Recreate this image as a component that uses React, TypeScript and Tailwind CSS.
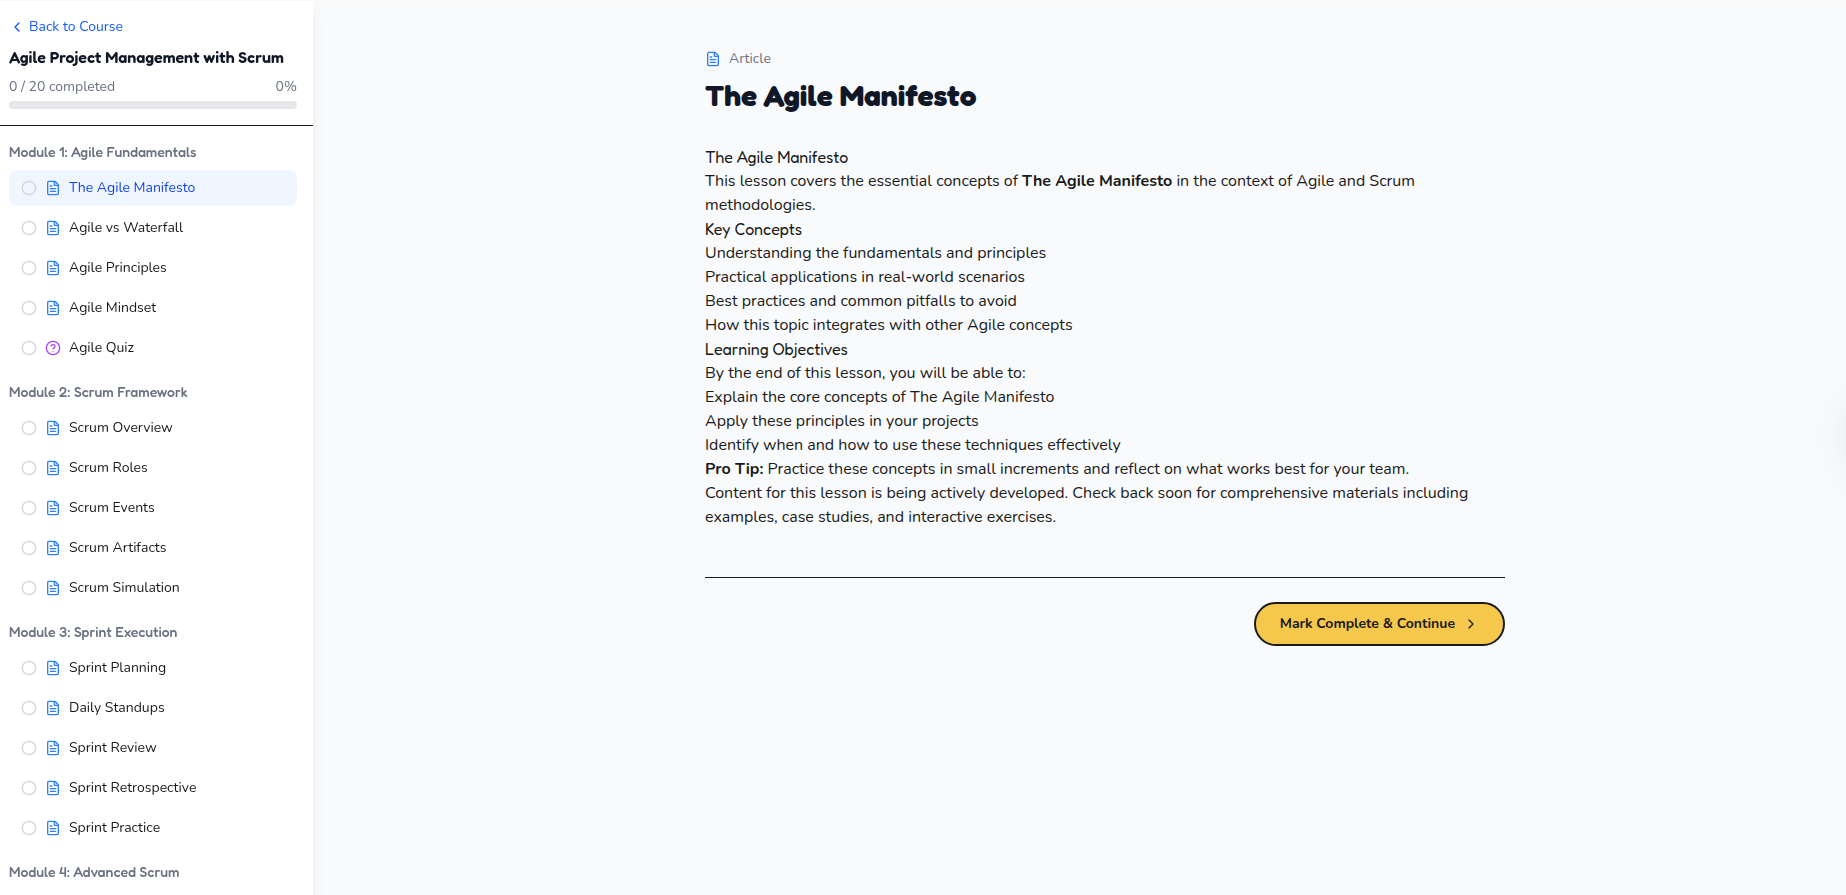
import { ChevronLeft, ChevronRight, Circle, CircleHelp, FileText } from "lucide-react";

type Lesson = {
  title: string;
  type: "article" | "quiz";
};

const article = (title: string): Lesson => ({ title, type: "article" });

const modules = [
  {
    title: "Module 1: Agile Fundamentals",
    lessons: [
      article("The Agile Manifesto"),
      article("Agile vs Waterfall"),
      article("Agile Principles"),
      article("Agile Mindset"),
      { title: "Agile Quiz", type: "quiz" } as Lesson,
    ],
  },
  {
    title: "Module 2: Scrum Framework",
    lessons: [
      article("Scrum Overview"),
      article("Scrum Roles"),
      article("Scrum Events"),
      article("Scrum Artifacts"),
      article("Scrum Simulation"),
    ],
  },
  {
    title: "Module 3: Sprint Execution",
    lessons: [
      article("Sprint Planning"),
      article("Daily Standups"),
      article("Sprint Review"),
      article("Sprint Retrospective"),
      article("Sprint Practice"),
    ],
  },
  {
    title: "Module 4: Advanced Scrum",
    lessons: [],
  },
];

const concepts = [
  "Understanding the fundamentals and principles",
  "Practical applications in real-world scenarios",
  "Best practices and common pitfalls to avoid",
  "How this topic integrates with other Agile concepts",
];

const objectives = [
  "Explain the core concepts of The Agile Manifesto",
  "Apply these principles in your projects",
  "Identify when and how to use these techniques effectively",
];

function LessonItem({ lesson, active }: { lesson: Lesson; active: boolean }) {
  return (
    <button
      type="button"
      className={`flex w-full items-center gap-2 rounded-lg px-3 py-2 text-left text-sm ${
        active ? "bg-blue-50 text-blue-700" : "text-[#1a1a1a]"
      }`}
    >
      <Circle className="size-4 shrink-0 text-gray-300" />
      {lesson.type === "quiz" ? (
        <CircleHelp className="size-4 shrink-0 text-purple-500" />
      ) : (
        <FileText className="size-4 shrink-0 text-blue-500" />
      )}
      <span className="truncate">{lesson.title}</span>
    </button>
  );
}

function Sidebar() {
  return (
    <aside className="flex w-[313px] shrink-0 flex-col overflow-hidden bg-white shadow-lg will-change-transform">
      <div className="border-b border-[#1a1a1a] py-4 pr-4 pl-[9px]">
        <a href="#course" className="flex items-center gap-1 text-sm text-blue-600">
          <ChevronLeft className="size-4" />
          Back to Course
        </a>
        <h2 className="mt-2 font-['Fredoka',sans-serif] text-base font-semibold text-gray-900">
          Agile Project Management with Scrum
        </h2>
        <div className="mt-2 flex justify-between text-sm text-gray-500">
          <span>0 / 20 completed</span>
          <span>0%</span>
        </div>
        <div className="mt-1 h-2 rounded-full bg-gray-200" />
      </div>

      <nav className="min-h-0 flex-1 overflow-hidden py-4 pr-4 pl-[9px]">
        {modules.map((module, index) => (
          <section key={module.title} className="mb-4">
            <h3 className="mb-2 font-['Fredoka',sans-serif] text-sm font-medium text-gray-500">
              {module.title}
            </h3>
            <div className="space-y-1">
              {module.lessons.map((lesson, i) => (
                <LessonItem key={lesson.title} lesson={lesson} active={index === 0 && i === 0} />
              ))}
            </div>
          </section>
        ))}
      </nav>
    </aside>
  );
}

export default function App() {
  return (
    <div className="relative flex h-screen overflow-hidden border-t border-[#faf8f3] bg-gray-50 font-['Nunito',sans-serif] text-[#1a1a1a]">
      <Sidebar />

      <main className="min-w-0 flex-1 overflow-hidden pl-[51px]">
        <article className="mx-auto max-w-4xl p-12">
          <header className="mb-8">
            <div className="mb-2 flex items-center gap-2 text-sm text-gray-500">
              <FileText className="size-4 text-blue-500" />
              Article
            </div>
            <h1 className="font-['Fredoka',sans-serif] text-3xl font-bold text-gray-900">
              The Agile Manifesto
            </h1>
          </header>

          <div>
            <h2 className="font-['Fredoka',sans-serif]">The Agile Manifesto</h2>
            <p>
              This lesson covers the essential concepts of <strong>The Agile Manifesto</strong> in
              the context of Agile and Scrum methodologies.
            </p>
            <h3 className="font-['Fredoka',sans-serif]">Key Concepts</h3>
            <ul>
              {concepts.map((item) => (
                <li key={item}>{item}</li>
              ))}
            </ul>
            <h3 className="font-['Fredoka',sans-serif]">Learning Objectives</h3>
            <p>By the end of this lesson, you will be able to:</p>
            <ul>
              {objectives.map((item) => (
                <li key={item}>{item}</li>
              ))}
            </ul>
            <p>
              <strong>Pro Tip:</strong> Practice these concepts in small increments and reflect on
              what works best for your team.
            </p>
            <p>
              Content for this lesson is being actively developed. Check back soon for comprehensive
              materials including examples, case studies, and interactive exercises.
            </p>
          </div>

          <footer className="mt-12 flex justify-end border-t border-[#1a1a1a] pt-6">
            <button
              type="button"
              className="flex items-center gap-2 rounded-full border-2 border-[#1a1a1a] bg-[#f5c84c] px-6 py-[10px] text-sm font-bold"
            >
              Mark Complete & Continue
              <ChevronRight className="size-4" />
            </button>
          </footer>
        </article>
      </main>

      {/* Closed drawer parked past the right edge, only its shadow shows */}
      <div className="absolute top-1/2 left-full ml-1 size-18 -translate-y-full rounded-full shadow-2xl" />
    </div>
  );
}
